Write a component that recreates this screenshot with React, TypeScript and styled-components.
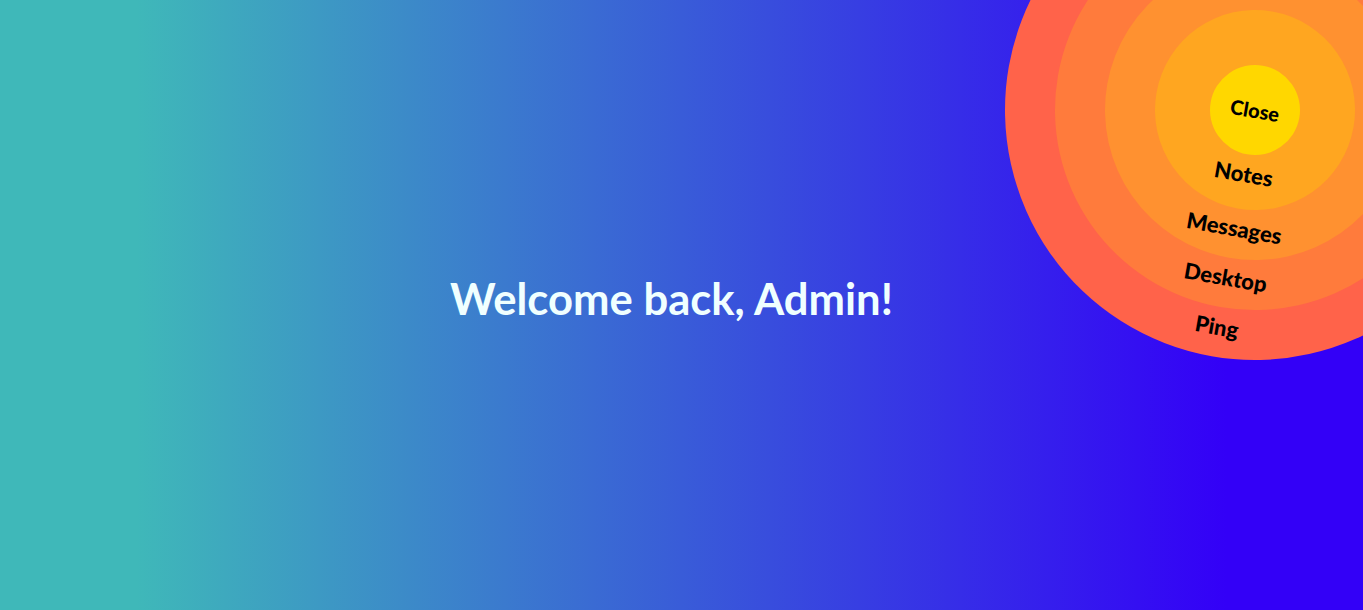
import React from "react";
import styled, { createGlobalStyle } from "styled-components";

const Global = createGlobalStyle`
  html, body { margin: 0; padding: 0; height: 100%; overflow: hidden; }
  #root { height: 100%; }
`;

const Page = styled.main`
  position: relative;
  width: 100vw;
  height: 100vh;
  overflow: hidden;
  background: linear-gradient(to right, #3fb8b9 10%, #3300f7 90%);
  display: flex;
  align-items: center;
  justify-content: center;
`;

const Title = styled.h1`
  margin: 0;
  padding: 0 20px 14px 0;
  font-family: "Lato", "Liberation Sans", sans-serif;
  font-weight: 700;
  font-size: 43.6px;
  letter-spacing: 0;
  color: #f0ffff;
`;

const Menu = styled.nav`
  position: absolute;
  top: -140px;
  right: -142px;
  transform: rotate(10deg);
`;

const Ring = styled.div<{ $size: number; $color: string; $pad: number }>`
  box-sizing: border-box;
  flex-shrink: 0;
  width: ${(p) => p.$size}px;
  height: ${(p) => p.$size}px;
  border-radius: 50%;
  background: ${(p) => p.$color};
  display: flex;
  flex-direction: column;
  align-items: center;
  padding-top: ${(p) => p.$pad}px;
`;

const Label = styled.span`
  flex-shrink: 0;
  margin-top: 8px;
  font-family: "Lato", "Liberation Sans", sans-serif;
  font-weight: 900;
  font-size: 22px;
  line-height: 24px;
  color: #000;
  cursor: pointer;
`;

const CloseButton = styled.button`
  flex-shrink: 0;
  width: 90px;
  height: 90px;
  border-radius: 50%;
  border: none;
  padding: 0;
  background: #ffd700;
  font-family: "Lato", "Liberation Sans", sans-serif;
  font-weight: 900;
  font-size: 20px;
  color: #000;
  cursor: pointer;
`;

export default function App() {
  return (
    <>
      <Global />
      <Page>
        <Title>Welcome back, Admin!</Title>
        <Menu>
          <Ring $size={500} $color="#ff634a" $pad={50}>
            <Ring $size={400} $color="#ff7b3c" $pad={50}>
              <Ring $size={300} $color="#ff9130" $pad={50}>
                <Ring $size={200} $color="#ffa620" $pad={55}>
                  <CloseButton>Close</CloseButton>
                  <Label>Notes</Label>
                </Ring>
                <Label>Messages</Label>
              </Ring>
              <Label>Desktop</Label>
            </Ring>
            <Label>Ping</Label>
          </Ring>
        </Menu>
      </Page>
    </>
  );
}
